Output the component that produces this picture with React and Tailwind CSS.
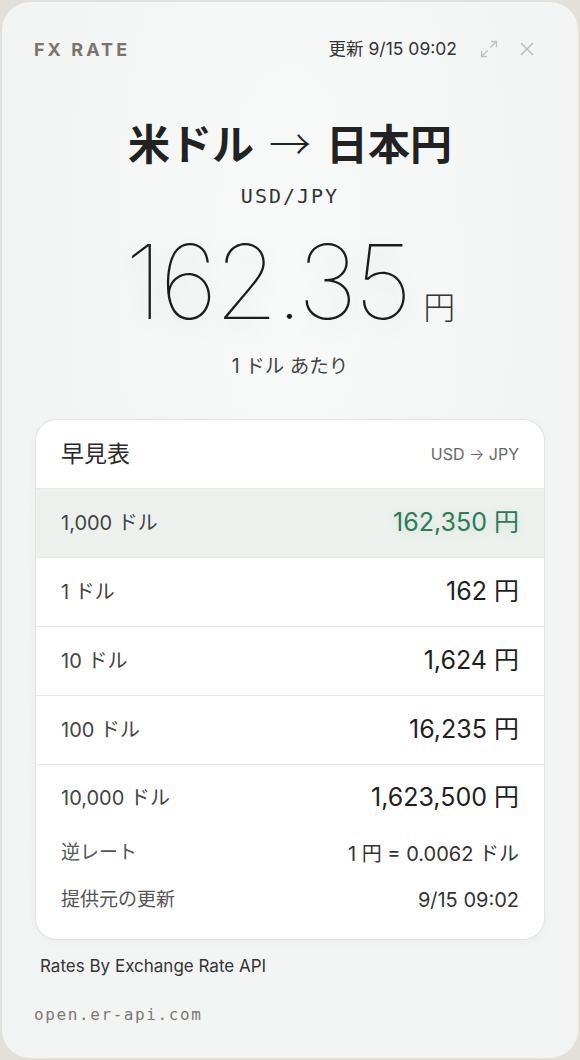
import { Maximize2, X } from "lucide-react";

const SANS = "font-['Inter','Noto_Sans_CJK_JP',sans-serif]";
const MONO = "font-['DejaVu_Sans_Mono','Liberation_Mono',monospace]";
const CJK = "font-['Noto_Sans_CJK_JP',sans-serif]";

const ROWS = [
  { usd: "1", jpy: "162" },
  { usd: "10", jpy: "1,624" },
  { usd: "100", jpy: "16,235" },
];

export default function App() {
  return (
    <div className={`w-[580px] h-[1060px] bg-[#e3dfda] p-[2px] ${SANS}`}>
      <div className="h-full rounded-[28px] bg-[radial-gradient(ellipse_at_50%_25%,#f8faf9_0%,#f2f5f3_60%,#f1f4f2_100%)] px-[32px] pt-[35px] flex flex-col">
        {/* Header */}
        <div className="flex items-center h-[24px]">
          <span className="text-[18px] font-bold tracking-[0.17em] text-[#7b746d]">FX RATE</span>
          <span className="ml-auto text-[17.5px] text-[#333]">更新 9/15 09:02</span>
          <Maximize2 className="ml-[22px] w-[20px] h-[20px] text-[#c0c0c0]" strokeWidth={1.6} />
          <X className="ml-[17px] mr-[8px] w-[22px] h-[22px] text-[#bdbdbd]" strokeWidth={1.6} />
        </div>

        {/* Title */}
        <h1 className="mt-[57px] text-center text-[42px] leading-[48px] font-bold text-[#222]">
          米ドル <span className={`mx-[5px] font-extralight ${CJK}`}>→</span> 日本円
        </h1>
        <p className={`mt-[13px] text-center text-[20px] leading-[28px] tracking-[0.1em] text-[#333] ${MONO}`}>
          USD/JPY
        </p>

        {/* Rate */}
        <div className="mt-[20px] flex items-baseline justify-center">
          <span className="text-[103px] leading-[104px] font-thin tracking-[-0.03em] text-[#1c1c1c] [text-shadow:0_8px_26px_rgba(0,0,0,0.14)]">
            162.35
          </span>
          <span className="ml-[14px] text-[32px] font-extralight text-[#333]">円</span>
        </div>
        <p className="mt-[20px] text-center text-[19.5px] leading-[24px] text-[#444]">1 ドル あたり</p>

        {/* Table */}
        <div className="mt-[41px] mx-[1px] rounded-[22px] bg-white border border-[#e1e3e1] shadow-[0_2px_8px_rgba(0,0,0,0.04)] overflow-hidden">
          <div className="h-[69px] flex items-center justify-between px-[25px] border-b border-[#e8eae8]">
            <span className="text-[23px] text-[#2b2b2b]">早見表</span>
            <span className="text-[16px] text-[#666]">USD <span className="font-light">→</span> JPY</span>
          </div>
          <div className="h-[69px] flex items-center justify-between px-[25px] bg-[#ecf1ee] border-b border-[#e6e9e7]">
            <span className="text-[20px] text-[#444]">1,000 ドル</span>
            <span className="text-[25px] text-[#2e7a55] [text-shadow:0_2px_10px_rgba(46,122,85,0.15)]">162,350 円</span>
          </div>
          {ROWS.map((r) => (
            <div key={r.usd} className="h-[69px] flex items-center justify-between px-[25px] border-b border-[#e8e8e8]">
              <span className="text-[20px] text-[#444]">{r.usd} ドル</span>
              <span className="text-[25px] text-[#1f1f1f]">{r.jpy} 円</span>
            </div>
          ))}
          <div className="px-[25px] pb-[16px]">
            <div className="h-[65px] flex items-center justify-between">
              <span className="text-[20px] text-[#444]">10,000 ドル</span>
              <span className="text-[25px] text-[#1f1f1f]">1,623,500 円</span>
            </div>
            <div className="h-[47px] flex items-center justify-between">
              <span className="text-[19px] text-[#555]">逆レート</span>
              <span className="text-[20px] text-[#333]">1 円 = 0.0062 ドル</span>
            </div>
            <div className="h-[46px] flex items-center justify-between">
              <span className="text-[19px] text-[#555]">提供元の更新</span>
              <span className="text-[20px] text-[#333]">9/15 09:02</span>
            </div>
          </div>
        </div>

        {/* Footer */}
        <p className="mt-[15px] ml-[6px] text-[17px] leading-[22px] text-[#333]">Rates By Exchange Rate API</p>
        <p className={`mt-[27px] text-[16px] leading-[22px] tracking-[0.1em] text-[#7d7873] ${MONO}`}>
          open.er-api.com
        </p>
      </div>
    </div>
  );
}
